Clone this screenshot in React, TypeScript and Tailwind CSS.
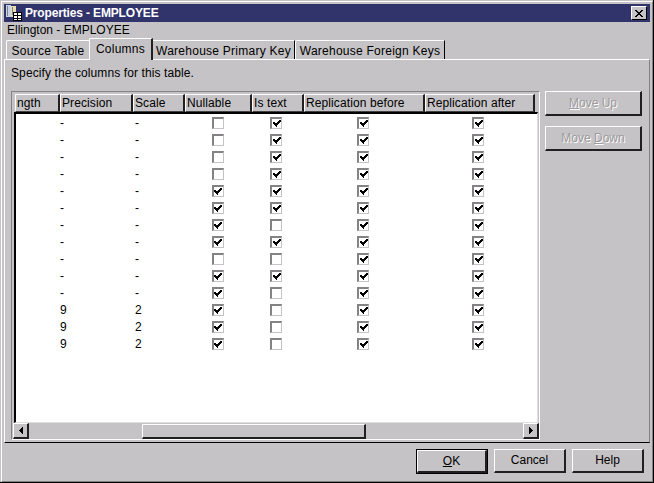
const rows = [
  { p: '-', s: '-', n: false, t: true },
  { p: '-', s: '-', n: false, t: true },
  { p: '-', s: '-', n: false, t: true },
  { p: '-', s: '-', n: false, t: true },
  { p: '-', s: '-', n: true, t: true },
  { p: '-', s: '-', n: true, t: true },
  { p: '-', s: '-', n: true, t: false },
  { p: '-', s: '-', n: true, t: true },
  { p: '-', s: '-', n: false, t: false },
  { p: '-', s: '-', n: true, t: true },
  { p: '-', s: '-', n: true, t: false },
  { p: '9', s: '2', n: true, t: false },
  { p: '9', s: '2', n: true, t: false },
  { p: '9', s: '2', n: true, t: false },
];

const headers = [
  { label: 'ngth', w: 'w-[45px]' },
  { label: 'Precision', w: 'w-[73px]' },
  { label: 'Scale', w: 'w-[52px]' },
  { label: 'Nullable', w: 'w-[67px]' },
  { label: 'Is text', w: 'w-[52px]' },
  { label: 'Replication before', w: 'w-[121px]' },
  { label: 'Replication after', w: 'w-[110px]' },
];

function Check({ on }: { on: boolean }) {
  return (
    <div className="w-[12px] h-[12px] bg-white border-2 border-t-[#848284] border-l-[#848284] border-r-[#c6c3c6] border-b-[#c6c3c6] border-r border-b flex items-center justify-center">
      {on && (
        <svg width="8" height="7" viewBox="0 0 8 7" shapeRendering="crispEdges">
          <path d="M0 2h2v1h2V2h1V1h1V0h2v2H7v1H6v1H5v1H4v2H3V6H2V5H1V4H0z" fill="#000" />
        </svg>
      )}
    </div>
  );
}

function Btn({ label, disabled, def, className }: { label: React.ReactNode; disabled?: boolean; def?: boolean; className: string }) {
  return (
    <div className={(def ? 'border border-black ' : '') + className}>
      <div className="w-full h-full flex items-center justify-center border-t border-l border-white border-b-2 border-r-2 border-b-[#212021] border-r-[#212021]">
        <span className={disabled ? 'text-[#9c9a9c] [text-shadow:1px_1px_0_#fff]' : 'text-black'}>{label}</span>
      </div>
    </div>
  );
}

function Arrow({ dir }: { dir: 'left' | 'right' }) {
  return (
    <div className="w-[16px] h-[16px] shrink-0 flex items-center justify-center border-t border-l border-white border-b-2 border-r-2 border-b-[#212021] border-r-[#212021]">
      <svg width="4" height="7" viewBox="0 0 4 7" shapeRendering="crispEdges">
        {dir === 'left' ? (
          <path d="M3 0h1v7H3V6H2V5H1V4H0V3h1V2h1V1h1z" fill="#000" />
        ) : (
          <path d="M0 0h1v1h1v1h1v1h1v1H3v1H2v1H1v1H0z" fill="#000" />
        )}
      </svg>
    </div>
  );
}

export default function App() {
  return (
    <div className="w-[654px] h-[483px] bg-[#c6c3c6] overflow-hidden text-[12px] leading-[15px] text-black font-['Liberation_Sans',Arial,sans-serif] border-r border-b border-black">
      <div className="w-full h-full pt-[1px] pl-[1px]">
        <div className="w-full h-full border border-t-white border-l-white border-r-[#848284] border-b-[#848284] p-[2px]">
          {/* title bar */}
          <div className="h-[18px] bg-[#31346b] flex items-center justify-between pl-[2px] pr-[3px]">
            <div className="flex items-center gap-[3px]">
              <svg width="16" height="16" viewBox="0 0 16 16" shapeRendering="crispEdges">
                <rect x="0" y="0" width="5" height="12" fill="#c6d3e6" />
                <rect x="1" y="1" width="1" height="10" fill="#848284" />
                <rect x="5" y="1" width="5" height="11" fill="#e6dcb0" />
                <rect x="6" y="2" width="1" height="8" fill="#848284" />
                <rect x="7" y="7" width="9" height="9" fill="#000" />
                <rect x="8" y="8" width="3" height="2" fill="#fff" />
                <rect x="12" y="8" width="3" height="2" fill="#fff" />
                <rect x="8" y="11" width="3" height="2" fill="#fff" />
                <rect x="12" y="11" width="3" height="2" fill="#fff" />
                <rect x="8" y="14" width="3" height="1" fill="#fff" />
                <rect x="12" y="14" width="3" height="1" fill="#fff" />
              </svg>
              <span className="text-white font-bold tracking-[-0.15px]">Properties - EMPLOYEE</span>
            </div>
            <div className="w-[16px] h-[14px] bg-[#c6c3c6] border border-t-white border-l-white border-r-black border-b-black flex items-center justify-center">
              <svg width="8" height="7" viewBox="0 0 8 7" shapeRendering="crispEdges">
                <path d="M0 0h2v1h1v1h2V1h1V0h2v1H7v1H6v1H5v1h1v1h1v1h1v1H6V6H5V5H3v1H2v1H0V6h1V5h1V4h1V3H2V2H1V1H0z" fill="#000" />
              </svg>
            </div>
          </div>

          <div className="h-[16px] pl-[3px] flex items-center">Ellington - EMPLOYEE</div>

          {/* tabs */}
          <div className="h-[21px] flex items-end pl-[2px] tracking-[0.25px]">
            <div className="h-[19px] w-[83px] pt-[2px] flex items-center justify-center border-t border-l border-white rounded-tl-[2px]">Source Table</div>
            <div className="h-[22px] w-[64px] -mb-px z-10 bg-[#c6c3c6] flex items-start pt-[3px] justify-center border-t border-l border-white border-r-2 border-r-[#212021] rounded-tl-[2px]">Columns</div>
            <div className="h-[19px] w-[142px] pt-[2px] flex items-center justify-center border-t border-white border-r border-r-black">Warehouse Primary Key</div>
            <div className="h-[19px] w-[150px] pt-[2px] flex items-center justify-center border-t border-l border-white border-r border-r-black rounded-tl-[2px]">Warehouse Foreign Keys</div>
          </div>

          {/* tab panel */}
          <div className="h-[384px] border border-t-white border-l-white border-r-[#848284] border-b-black pl-[6px] pt-[5px]">
            <div className="h-[17px] flex items-center tracking-[0.1px]">Specify the columns for this table.</div>
            <div className="flex mt-[9px] gap-[5px]">
              {/* table */}
              <div className="w-[529px] h-[349px] border border-t-[#848284] border-l-[#848284] border-r-white border-b-white pt-[2px] pl-[2px] tracking-[0.1px]">
                <div className="flex h-[18px] pl-px">
                  {headers.map((h) => (
                    <div key={h.label} className={h.w + ' h-full shrink-0 flex items-center pl-px border-t border-l border-white border-b border-r-2 border-b-[#424142] border-r-[#212021]'}>
                      {h.label}
                    </div>
                  ))}
                </div>
                <div className="h-[311px] w-[524px] bg-white border-2 border-t-black border-l-black border-r border-b border-r-[#dedfde] border-b-[#dedfde] overflow-hidden">
                  {rows.map((r, i) => (
                    <div key={i} className="flex h-[17px] items-center">
                      <div className="w-[43px] shrink-0" />
                      <div className="w-[74px] shrink-0 pl-px pt-px">{r.p}</div>
                      <div className="w-[52px] shrink-0 pl-[2px] pt-px">{r.s}</div>
                      <div className="w-[65px] shrink-0 flex justify-center"><Check on={r.n} /></div>
                      <div className="w-[52px] shrink-0 flex justify-center"><Check on={r.t} /></div>
                      <div className="w-[122px] shrink-0 flex justify-center"><Check on /></div>
                      <div className="w-[108px] shrink-0 flex justify-center"><Check on /></div>
                    </div>
                  ))}
                </div>
                {/* horizontal scrollbar */}
                <div className="flex h-[16px] w-[526px] -ml-px">
                  <Arrow dir="left" />
                  <div className="flex-1">
                    <div className="ml-[113px] w-[224px] h-[15px] mt-px border-t border-l border-white border-b-2 border-r-2 border-b-[#212021] border-r-[#212021]" />
                  </div>
                  <Arrow dir="right" />
                </div>
              </div>
              <div className="flex flex-col gap-[10px]">
                <Btn className="w-[97px] h-[25px]" disabled label={<><u>M</u>ove Up</>} />
                <Btn className="w-[97px] h-[25px]" disabled label={<>Move <u>D</u>own</>} />
              </div>
            </div>
          </div>

          {/* footer */}
          <div className="flex justify-end gap-[6px] pt-[6px] pr-[6px]">
            <Btn className="w-[72px] h-[25px]" def label={<><u>O</u>K</>} />
            <Btn className="w-[72px] h-[24px]" label="Cancel" />
            <Btn className="w-[72px] h-[24px]" label="Help" />
          </div>
        </div>
      </div>
    </div>
  );
}
